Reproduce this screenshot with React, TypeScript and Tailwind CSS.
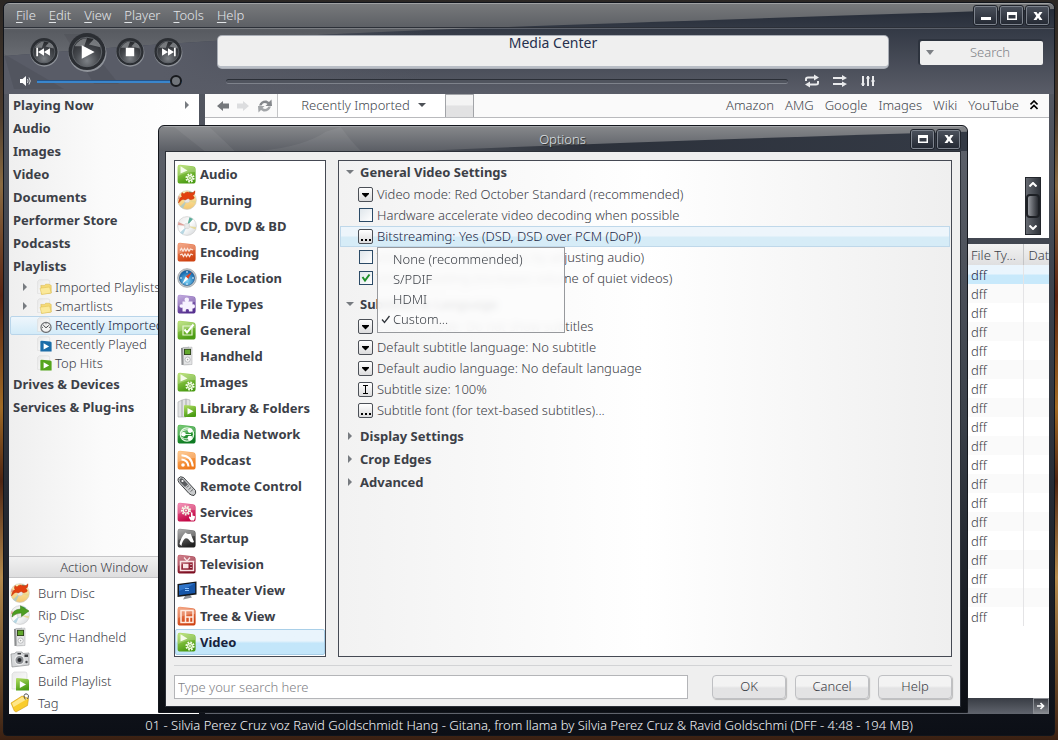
import React, { useState } from "react";

type IconName =
  | "media"
  | "burn"
  | "disc"
  | "encoding"
  | "compass"
  | "puzzle"
  | "check"
  | "handheld"
  | "library"
  | "network"
  | "podcast"
  | "remote"
  | "services"
  | "startup"
  | "television"
  | "theater"
  | "tree"
  | "rip"
  | "camera"
  | "build"
  | "tag"
  | "folder"
  | "clock"
  | "played"
  | "hits";

const tileColors: Record<string, [string, string]> = {
  green: ["#b4e065", "#4b9c14"],
  forest: ["#55bf4e", "#0d7a22"],
  orange: ["#f3946a", "#cf4313"],
  amber: ["#ffc07a", "#ef7a1c"],
  purple: ["#b79adb", "#56308f"],
  pink: ["#f27aa9", "#c30845"],
  black: ["#9b9b9b", "#222222"],
  red: ["#c8606f", "#7d0f22"],
};

const Gradients: React.FC = () => (
  <svg width="0" height="0" className="absolute" aria-hidden="true">
    <defs>
      {Object.entries(tileColors).map(([name, [from, to]]) => (
        <linearGradient key={name} id={`tile-${name}`} x1="0" y1="0" x2="0.4" y2="1">
          <stop offset="0" stopColor={from} />
          <stop offset="1" stopColor={to} />
        </linearGradient>
      ))}
      <linearGradient id="disc" x1="0" y1="0" x2="1" y2="1">
        <stop offset="0" stopColor="#e6e6e6" />
        <stop offset="0.5" stopColor="#ffffff" />
        <stop offset="1" stopColor="#cfd3d6" />
      </linearGradient>
      <linearGradient id="gold" x1="0" y1="0" x2="0" y2="1">
        <stop offset="0" stopColor="#fff1b8" />
        <stop offset="1" stopColor="#f3c76f" />
      </linearGradient>
      <radialGradient id="compass" cx="0.5" cy="0.7" r="0.6">
        <stop offset="0" stopColor="#7fd3f7" />
        <stop offset="1" stopColor="#1567ac" />
      </radialGradient>
      <radialGradient id="knob" cx="0.5" cy="0.8" r="0.8">
        <stop offset="0" stopColor="#7d8186" />
        <stop offset="0.5" stopColor="#45484d" />
        <stop offset="1" stopColor="#24262a" />
      </radialGradient>
      <linearGradient id="sheet" x1="0" y1="0" x2="1" y2="1">
        <stop offset="0" stopColor="#e9e9e9" />
        <stop offset="1" stopColor="#ffffff" />
      </linearGradient>
    </defs>
  </svg>
);

const Tile: React.FC<{ color: string; children?: React.ReactNode }> = ({ color, children }) => (
  <>
    <path
      d="M3 .7 16 2.2q2.6.3 2.6 2.6V17q0 2.6-2.8 2.6H3.2Q.6 19.6.6 17V3Q.6.6 3 .7Z"
      fill={`url(#tile-${color})`}
    />
    <path d="M1.2 3Q1.2 1.3 3 1.3L16 2.8Q18 3 18 4.8V8Q9 8 1.2 12Z" fill="#fff" opacity="0.22" />
    {children}
  </>
);

const Gear: React.FC<{ cx: number; cy: number; r: number }> = ({ cx, cy, r }) => (
  <>
    <circle cx={cx} cy={cy} r={r} fill="none" stroke="#f4fbe8" strokeWidth="2" strokeDasharray="1.7 1.1" />
    <circle cx={cx} cy={cy} r={r - 1.3} fill="none" stroke="#f4fbe8" strokeWidth="1.2" />
    <circle cx={cx} cy={cy} r="1" fill="#f4fbe8" />
  </>
);

const Flame: React.FC = () => (
  <path
    d="M1.5 13Q2 8 5 6.5 3.8 4.5 5 2.5 6 4 7.5 3.5 9 1 13 2.6 16 3.5 18 .8 18.4 4.5 15.5 6 18 6.5 17 8.6 14 10.6 12 9 11.5 8 10 9 8 10.5 7 9.5 6 9 4.5 10 3 11 1.5 13Z"
    fill="#e2400f"
    stroke="#b92a06"
    strokeWidth="0.4"
  />
);

const Disc: React.FC<{ fill: string }> = ({ fill }) => (
  <>
    <circle cx="10" cy="10" r="9.4" fill={fill} stroke="#c9c9c9" strokeWidth="0.6" />
    <path d="M10 10 12.5 1.2 16 3Z" fill="#5fae9c" />
    <path d="M10 10 3 16.5 6 18.6Z" fill="#9ac7d8" opacity="0.7" />
    <path d="M10 10 .9 9 1.5 6Z" fill="#d98f84" opacity="0.8" />
    <path d="M10 10 19 11 18.5 13.5Z" fill="#e3d68c" opacity="0.8" />
    <circle cx="10" cy="10" r="2.8" fill="#eee" stroke="#c4c4c4" strokeWidth="0.5" />
    <circle cx="10" cy="10" r="1.2" fill="#fff" stroke="#bbb" strokeWidth="0.4" />
  </>
);

const Sheet: React.FC = () => (
  <path d="M4 1H15Q17 1 17 3V18H2V3Z" fill="url(#sheet)" stroke="#d5d5d5" strokeWidth="0.6" />
);

const drawings: Record<IconName, React.ReactNode> = {
  media: (
    <Tile color="green">
      <path d="M3.5 2.2V9.5L10.5 6.5Z" fill="#f6fcec" />
      <Gear cx={13} cy={14} r={3.6} />
    </Tile>
  ),
  burn: (
    <>
      <Disc fill="url(#gold)" />
      <Flame />
    </>
  ),
  disc: <Disc fill="url(#disc)" />,
  encoding: (
    <Tile color="orange">
      <path
        d="M3 8.5 4.5 6.5 6 9 7.5 6.5 9 9 10.5 6.5 12 9 13.5 7 16 8M3 13 5 12 6.5 14.5 8 12 9.5 14.5 11 12 12.5 14.5 14 12 16 13"
        fill="none"
        stroke="#fbe3d8"
        strokeWidth="1.3"
      />
    </Tile>
  ),
  compass: (
    <>
      <circle cx="10" cy="10" r="9.3" fill="#c9ced2" stroke="#7d8489" strokeWidth="0.6" />
      <circle cx="10" cy="10" r="7.6" fill="url(#compass)" stroke="#23547f" strokeWidth="0.6" />
      <path d="M14.8 4 8.8 8.6 11.2 11Z" fill="#e5421d" />
      <path d="M5.2 16 8.8 8.6 11.2 11Z" fill="#fff" />
      <path d="M10 3v2M10 15v2M3 10h2M15 10h2" stroke="#e8f5ff" />
    </>
  ),
  puzzle: (
    <Tile color="purple">
      <path
        d="M7.5 5.5Q7.5 3.5 9.8 3.5T12 5.5Q12 6.8 11.2 7.5H15.5V10.5Q18 9.800 18 12.300T15.500 14.500V17.500H11.800Q12.500 15 10.300 15T9 17.500H5.500V13.500Q2.500 14.200 2.500 12T5.500 10.500V7.500H8.500Q7.500 6.800 7.500 5.500Z"
        fill="#f7f2ff"
      />
    </Tile>
  ),
  check: (
    <Tile color="green">
      <path d="M6 6H15V15H6Z" fill="none" stroke="#e9f7d3" strokeWidth="1.2" />
      <path d="M7.5 9.5 10 12.5 16.5 4.5" fill="none" stroke="#fff" strokeWidth="2" />
    </Tile>
  ),
  handheld: (
    <>
      <path d="M4 2 12 .8 12.5 18.5 4.5 19Z" fill="#8b8d8f" />
      <path d="M6 1.5 15 1.2V18.5L6.5 19Z" fill="#e3e4e5" stroke="#a5a7a9" strokeWidth="0.5" />
      <path d="M7 2.8H14V9H7Z" fill="#2c3a1c" />
      <path d="M7.8 3.6H13.2V8.2H7.8Z" fill="#62a82e" />
      <circle cx="10.6" cy="13.6" r="2.6" fill="#fafafa" stroke="#9b9d9f" strokeWidth="0.6" />
      <circle cx="10.6" cy="13.6" r="0.8" fill="#a5a7a9" />
    </>
  ),
  library: (
    <>
      <path d="M1 4 5 2V19H1ZM5 2 9 1V19H5ZM9 1 13 2V18H9Z" fill="#e2e3e4" stroke="#a9abad" strokeWidth="0.6" />
      <path d="M8 7 18 8Q19 8 19 9.5V18Q19 19 18 19H8Q7 19 7 18V8Q7 7 8 7Z" fill="url(#tile-green)" />
      <path d="M10.5 10V16.5L16.5 13.2Z" fill="#fff" />
    </>
  ),
  network: (
    <Tile color="forest">
      <circle cx="10" cy="10.5" r="6.6" fill="none" stroke="#e6f8e3" strokeWidth="1.3" />
      <path d="M4 8Q10 3.5 15 7.5M5 13.5Q10 17 15.5 12M6 10.5H14" fill="none" stroke="#e6f8e3" />
      <circle cx="13" cy="6.6" r="2.3" fill="#fff" />
      <circle cx="6.5" cy="10.3" r="2.3" fill="#fff" />
      <circle cx="12.8" cy="14" r="2.3" fill="#fff" />
    </Tile>
  ),
  podcast: (
    <Tile color="amber">
      <circle cx="6" cy="15" r="1.8" fill="#fff" />
      <path d="M4.5 9.5Q11 10 11.5 16.5M4.5 5.2Q15 6 15.8 16.5" fill="none" stroke="#fff" strokeWidth="2.1" />
    </Tile>
  ),
  remote: (
    <>
      <path
        d="M1.2 2.5Q3-.5 6.5 1.5L18.5 14.5Q19.5 17.5 17 19.5 14 19.5 12 17.5L2 6.5Q.5 4.5 1.2 2.5Z"
        fill="#c9cbcd"
        stroke="#3e4042"
        strokeWidth="1"
      />
      <path d="M2.5 3.5Q4 1.5 6 3L11 8.5 8 11 3 6Z" fill="#5a5c5f" />
      <path d="M9.5 11.5 12 9.5M11.5 13.5 14 11.5M13.5 15.5 16 13.5" stroke="#6b6d6f" />
      <circle cx="5.5" cy="5" r="1.1" fill="#fff" />
    </>
  ),
  services: (
    <Tile color="pink">
      <Gear cx={9} cy={8.5} r={4} />
      <path d="M13 17.5Q11.5 15.5 12 14.5L14 15V10.5Q15 10 15.5 11V13.5L18 14.2Q18 16.5 17 18.5H14Z" fill="#fff" />
    </Tile>
  ),
  startup: (
    <Tile color="black">
      <path d="M2.5 16Q4 9 8.5 4.5 11 7 13.5 5.5L17 14Q14 15.5 12.5 12.5 10.5 9.5 8 10.5 5 13 4.5 18Z" fill="#fff" />
    </Tile>
  ),
  television: (
    <Tile color="red">
      <path d="M3.5 7.5H16.5V16.5H3.5Z" fill="none" stroke="#f9e4e6" strokeWidth="1.5" />
      <path d="M6 9.8H11.5V14.3H6Z" fill="#f9e4e6" />
      <path d="M14 10V11M14 13V14M7 3.5 10 7 13 3.5" fill="none" stroke="#f9e4e6" strokeWidth="1.2" />
    </Tile>
  ),
  theater: (
    <>
      <path d="M6 19.5 15 17.5 13 15 8 16Z" fill="#8b8f94" />
      <path d="M.5 4 19.5 1.5V14.5L.5 17Z" fill="#15181c" />
      <path d="M2 5.2 18.2 3V13L2 15.200Z" fill="#1756a8" />
      <path d="M2 5.2 18.2 3Q11 8 2 11Z" fill="#2f74c8" />
      <path d="M8 8.5H12M8 10.5H12" stroke="#8cc3ff" />
    </>
  ),
  tree: (
    <Tile color="orange">
      <path d="M4 4.5H16V16.5H4ZM8.5 4.5V16.5M8.5 11H16M12.5 11V16.5" fill="none" stroke="#ffeadf" strokeWidth="1.5" />
    </Tile>
  ),
  rip: (
    <>
      <Disc fill="url(#disc)" />
      <path d="M2 12Q2 4.5 10.5 4V.8L19 6 11.5 11.5V8Q6 7.5 2 12Z" fill="#4c9e22" stroke="#2f7510" strokeWidth="0.5" />
    </>
  ),
  camera: (
    <>
      <path d="M1 5 5 4.5 6 3H12L13 4.5 19 4V16L2 18Z" fill="#d4d6d8" stroke="#8e9092" strokeWidth="0.7" />
      <circle cx="9.5" cy="11" r="4.6" fill="#8b8e92" stroke="#eceded" strokeWidth="1.2" />
      <circle cx="9.5" cy="11" r="2" fill="#25272a" />
      <path d="M14.5 5.5H18V8H14.5ZM7.5 4H11V5.5H7.5Z" fill="#3b3d40" />
      <circle cx="16.5" cy="13" r="1.2" fill="#47494c" />
    </>
  ),
  build: (
    <>
      <Sheet />
      <path d="M7 7 17.5 8Q19 8.2 19 9.5V19.5H6V8Q6 7 7 7Z" fill="url(#tile-green)" />
      <path d="M9.8 10V17L16 13.5Z" fill="#fff" />
    </>
  ),
  tag: (
    <>
      <path d="M1 10 12 3 18.5 5.5 17.5 12.5 6 19Q4 18.5 3.5 16Z" fill="#f9cc2c" stroke="#cf9812" strokeWidth="0.6" />
      <path d="M2 10.3 12 4 17.5 6Q10 10 3.5 14Z" fill="#ffe78a" />
      <path d="M15.3 6.5Q12.5 1.5 16 .8 20 1.5 17.5 6" fill="none" stroke="#4c4c4c" />
    </>
  ),
  folder: (
    <>
      <Sheet />
      <path d="M6 8H11L12 6.5H16L19 8V17.5L7 19Z" fill="#f5da76" stroke="#d5b23f" strokeWidth="0.6" />
      <path d="M5 11.5 17 10 19 17.5 7 19.3Z" fill="#fbe99a" stroke="#dcbb4d" strokeWidth="0.6" />
    </>
  ),
  clock: (
    <>
      <Sheet />
      <circle cx="12.5" cy="13" r="6.3" fill="#f2f2f2" stroke="#6f7174" strokeWidth="1.5" />
      <path d="M9 10 12.5 13.5 16 10.5M12.5 8V9M17.5 13H16.5M8.5 13H7.5" fill="none" stroke="#3e4042" strokeWidth="1.2" />
    </>
  ),
  played: (
    <>
      <Sheet />
      <path d="M7 6 17.5 7Q19.5 7.200 19.500 8.500V19.500H5.500V7Q5.500 6 7 6Z" fill="#1c6da8" />
      <path d="M9.5 9V17L16.5 13Z" fill="#fff" />
    </>
  ),
  hits: (
    <>
      <Sheet />
      <path d="M7 6 17.5 7Q19.5 7.200 19.500 8.500V19.500H5.500V7Q5.500 6 7 6Z" fill="#55a51c" />
      <path d="M9.5 9V17L16.5 13Z" fill="#fff" />
    </>
  ),
};

const Icon: React.FC<{ name: IconName; className?: string }> = ({ name, className = "size-5" }) => (
  <svg viewBox="0 0 20 20" className={`shrink-0 ${className}`} aria-hidden="true">
    {drawings[name]}
  </svg>
);

const Triangle: React.FC<{ open?: boolean }> = ({ open = false }) => (
  <svg viewBox="0 0 8 8" className="size-2 shrink-0" aria-hidden="true">
    <path d={open ? "M0 2H8L4 6Z" : "M2 0V8L6 4Z"} fill="#777b80" />
  </svg>
);

const menus = ["File", "Edit", "View", "Player", "Tools", "Help"];
const links = ["Amazon", "AMG", "Google", "Images", "Wiki", "YouTube"];

const library = ["Playing Now", "Audio", "Images", "Video", "Documents", "Performer Store", "Podcasts", "Playlists"];

const playlists: { label: string; icon: IconName; expandable?: boolean; selected?: boolean }[] = [
  { label: "Imported Playlists", icon: "folder", expandable: true },
  { label: "Smartlists", icon: "folder", expandable: true },
  { label: "Recently Imported", icon: "clock", selected: true },
  { label: "Recently Played", icon: "played" },
  { label: "Top Hits", icon: "hits" },
];

const actions: { label: string; icon: IconName }[] = [
  { label: "Burn Disc", icon: "burn" },
  { label: "Rip Disc", icon: "rip" },
  { label: "Sync Handheld", icon: "handheld" },
  { label: "Camera", icon: "camera" },
  { label: "Build Playlist", icon: "build" },
  { label: "Tag", icon: "tag" },
];

const categories: { label: string; icon: IconName }[] = [
  { label: "Audio", icon: "media" },
  { label: "Burning", icon: "burn" },
  { label: "CD, DVD & BD", icon: "disc" },
  { label: "Encoding", icon: "encoding" },
  { label: "File Location", icon: "compass" },
  { label: "File Types", icon: "puzzle" },
  { label: "General", icon: "check" },
  { label: "Handheld", icon: "handheld" },
  { label: "Images", icon: "media" },
  { label: "Library & Folders", icon: "library" },
  { label: "Media Network", icon: "network" },
  { label: "Podcast", icon: "podcast" },
  { label: "Remote Control", icon: "remote" },
  { label: "Services", icon: "services" },
  { label: "Startup", icon: "startup" },
  { label: "Television", icon: "television" },
  { label: "Theater View", icon: "theater" },
  { label: "Tree & View", icon: "tree" },
  { label: "Video", icon: "media" },
];

const files = Array.from({ length: 19 }, (_, i) => ({ id: i, type: "dff" }));

interface WindowButtonProps {
  kind: "minimize" | "maximize" | "close";
}

const WindowButton: React.FC<WindowButtonProps> = ({ kind }) => (
  <button
    type="button"
    aria-label={kind}
    className="flex h-[19px] w-[23px] items-center justify-center rounded-xs border border-[#7d838d] bg-[#2d323c] bg-linear-to-b from-[#4a505b] to-[#252a34] outline outline-[#20242c]"
  >
    <svg viewBox="0 0 12 12" className="size-3" aria-hidden="true">
      {kind === "minimize" && <path d="M1 7H11V10H1Z" fill="#fff" />}
      {kind === "maximize" && <path d="M1 2H11V10H1ZM2.5 5V8.5H9.5V5Z" fill="#fff" fillRule="evenodd" />}
      {kind === "close" && (
        <path d="M1.5 2H4.5L6 4.2 7.5 2H10.5L7.7 6 10.5 10H7.5L6 7.8 4.5 10H1.5L4.3 6Z" fill="#fff" />
      )}
    </svg>
  </button>
);

const transport = [
  { label: "Previous", size: "size-7", path: "M9 14V26H11.5V14ZM11.500 20 20 14.500V25.500ZM20 20 28.500 14.500V25.500Z" },
  { label: "Play", size: "size-[38px]", path: "M14.5 13V27L28 20Z" },
  { label: "Stop", size: "size-7", path: "M14 14H26V26H14Z" },
  { label: "Next", size: "size-7", path: "M28.500 14V26H31V14ZM11.500 14.500 20 20 11.500 25.500ZM20 14.500 28.500 20 20 25.500Z" },
];

const TransportButton: React.FC<{ label: string; size: string; path: string }> = ({ label, size, path }) => (
  <button type="button" aria-label={label} className={`shrink-0 ${size}`}>
    <svg viewBox="0 0 40 40" className="size-full overflow-visible" aria-hidden="true">
      <circle cx="20.500" cy="21" r="20" fill="#8f939a" />
      <circle cx="20" cy="19.5" r="19.5" fill="#2b2e33" />
      <circle cx="20" cy="20" r="15.5" fill="url(#knob)" stroke="#63676d" strokeWidth="1" />
      <path d="M7 14Q12 5.5 20 5.5L17 14ZM22 12 27 6.5Q33 9 34 15Z" fill="#aeb2b7" opacity="0.55" />
      <path d={path} fill="#fff" />
    </svg>
  </button>
);

const Sidebar: React.FC = () => (
  <aside className="flex w-[190px] shrink-0 flex-col bg-white bg-linear-to-r from-[#efefef] via-[#fbfbfb] to-[#ffffff] text-[#3c4047]">
    <nav className="flex-1">
      <ul>
        {library.map((label, index) => (
          <li key={label} className="flex h-[23px] items-center justify-between pr-2 pb-[2px] pl-1">
            <a href="#" className="font-bold">
              {label}
            </a>
            {index === 0 && <Triangle />}
          </li>
        ))}
        {playlists.map(({ label, icon, expandable, selected }) => (
          <li
            key={label}
            className={`ml-px flex h-[19px] items-center rounded-xs border pb-px pl-[10px] ${
              selected
                ? "border-[#b9d5ea] bg-linear-to-b from-[#eef6fc] to-[#d3ebf8] text-[#1b2644]"
                : "border-transparent"
            }`}
          >
            <span className="flex w-[15px] items-center">{expandable && <Triangle />}</span>
            <Icon name={icon} className="mr-[3px] size-4" />
            <a href="#" className="whitespace-nowrap">
              {label}
            </a>
          </li>
        ))}
        {["Drives & Devices", "Services & Plug-ins"].map((label) => (
          <li key={label} className="flex h-[23px] items-center pb-[2px] pl-1">
            <a href="#" className="font-bold">
              {label}
            </a>
          </li>
        ))}
      </ul>
    </nav>
    <section className="bg-white">
      <h2 className="flex h-[22px] items-center justify-center border-y border-[#c5c5c7] bg-linear-to-b from-[#f1f1f1] to-[#dededf]">
        Action Window
      </h2>
      <ul className="pt-1">
        {actions.map(({ label, icon }) => (
          <li key={label}>
            <button type="button" className="flex h-[22px] w-full items-center gap-2 pl-px">
              <Icon name={icon} />
              {label}
            </button>
          </li>
        ))}
      </ul>
    </section>
  </aside>
);

const FileView: React.FC = () => (
  <main className="flex min-w-0 flex-1 flex-col">
    <div className="flex h-6 items-stretch border-b border-[#b9babd] bg-[#fafafa] text-[#43474e]">
      <div className="flex w-[73px] items-center gap-2 border-r border-[#c4c5c7] pl-3">
        <button type="button" aria-label="Back">
          <svg viewBox="0 0 12 10" className="h-[10px] w-3">
            <path d="M0 5 6 0V2.5H12V7.5H6V10Z" fill="#75787c" />
          </svg>
        </button>
        <button type="button" aria-label="Forward">
          <svg viewBox="0 0 12 10" className="h-[10px] w-3">
            <path d="M12 5 6 0V2.5H0V7.5H6V10Z" fill="#dcdddf" />
          </svg>
        </button>
        <button type="button" aria-label="Refresh">
          <svg viewBox="0 0 16 14" className="h-[14px] w-4">
            <path d="M2 6.5Q4 1 9.5 1.5L12 3 14.5.5 15 7H8.5L10.5 5Q6.500 2.500 4.500 6.500Z" fill="#85888c" />
            <path d="M14 7.5Q12 13 6.5 12.5L4 11 1.5 13.5 1 7H7.5L5.5 9Q9.500 11.500 11.500 7.500Z" fill="#a2a5a8" />
          </svg>
        </button>
      </div>
      <button type="button" className="flex w-[167px] items-center justify-center gap-2 bg-white pb-[2px] pl-1">
        Recently Imported
        <svg viewBox="0 0 8 4" className="h-1 w-2" aria-hidden="true">
          <path d="M0 0H8L4 4Z" fill="#4d5157" />
        </svg>
      </button>
      <button
        type="button"
        aria-label="New tab"
        className="w-[29px] border-x border-t border-[#a2a4a8] bg-linear-to-b from-[#f4f4f4] from-45% to-[#e2e2e3] to-50%"
      />
      <nav className="ml-auto flex items-center gap-[11px] pr-[11px] pb-[2px]">
        {links.map((link) => (
          <a key={link} href="#">
            {link}
          </a>
        ))}
        <button type="button" aria-label="Collapse">
          <svg viewBox="0 0 8 10" className="h-[10px] w-2">
            <path d="M.5 4.5 4 1 7.5 4.5M.5 9 4 5.5 7.5 9" fill="none" stroke="#000" strokeWidth="1.6" />
          </svg>
        </button>
      </nav>
    </div>

    <div className="flex h-[120px] justify-end bg-white pt-[59px] pr-2">
      <div className="flex h-[58px] w-4 flex-col items-center justify-between border border-[#23262c] bg-linear-to-r from-[#666a71] to-[#30343b] py-1">
        <svg viewBox="0 0 8 5" className="h-[5px] w-2" aria-hidden="true">
          <path d="M.5 4.5 4 1 7.5 4.5" fill="none" stroke="#fff" strokeWidth="2" />
        </svg>
        <div className="h-6 w-[14px] rounded-sm border-2 border-[#1d2025] bg-linear-to-r from-[#9a9da3] to-[#2a2d33]" />
        <svg viewBox="0 0 8 5" className="h-[5px] w-2" aria-hidden="true">
          <path d="M.5 .5 4 4 7.5 .5" fill="none" stroke="#fff" strokeWidth="2" />
        </svg>
      </div>
    </div>

    <div className="mt-[6px] flex-1 bg-white">
      <table className="w-full table-fixed text-left text-[#3c4047]">
        <colgroup>
          <col />
          <col className="w-[57px]" />
          <col className="w-[26px]" />
        </colgroup>
        <thead>
          <tr className="h-[21px] bg-linear-to-b from-[#f2f2f2] to-[#dfdfe0]">
            <td />
            <th scope="col" className="border-r border-[#c4c5c7] pl-[5px] leading-[18px] font-light whitespace-nowrap">
              File Ty...
            </th>
            <th scope="col" className="overflow-hidden pl-[5px] leading-[18px] font-light">
              Dat
            </th>
          </tr>
        </thead>
        <tbody>
          {files.map(({ id, type }) => (
            <tr
              key={id}
              className={`h-[19px] ${
                id === 0
                  ? "bg-linear-to-b from-[#eaf5fd] from-45% to-[#c8e9fb] to-55% text-[#1b2644]"
                  : id % 2
                    ? "bg-[#fafafa]"
                    : "bg-white"
              }`}
            >
              <td />
              <td className="border-r border-[#e4e4e6] pl-[5px] leading-[18px]">{type}</td>
              <td />
            </tr>
          ))}
        </tbody>
      </table>
    </div>
    <div className="flex h-4 justify-end bg-linear-to-b from-[#383c44] to-[#61656e]">
      <button
        type="button"
        aria-label="Scroll right"
        className="flex w-4 items-center justify-center border border-[#8a8d93] bg-linear-to-b from-[#3a3d44] to-[#85888e]"
      >
        <svg viewBox="0 0 8 8" className="size-2">
          <path d="M0 4H6M3.5 1 6.5 4 3.5 7" fill="none" stroke="#fff" strokeWidth="1.7" />
        </svg>
      </button>
    </div>
  </main>
);

interface SettingProps {
  kind: "menu" | "dialog" | "text";
  label: string;
}

const Setting: React.FC<SettingProps> = ({ kind, label }) => (
  <button type="button" className="flex h-[21px] w-full items-center gap-1 pb-px pl-[18px] whitespace-nowrap">
    <span className="flex size-[15px] items-center justify-center rounded-xs border border-[#4c5057] bg-linear-to-b from-white to-[#dcdcdd]">
      <svg viewBox="0 0 13 13" className="size-[13px]" aria-hidden="true">
        {kind === "menu" && <path d="M3 5H10V6L6.5 9.5 3 6Z" fill="#000" />}
        {kind === "dialog" && <path d="M2 9H4V11H2ZM6 9H8V11H6ZM10 9H12V11H10Z" fill="#000" />}
        {kind === "text" && <path d="M4 2.5H9M4 10.5H9M6.5 2.5V10.5" fill="none" stroke="#000" />}
      </svg>
    </span>
    {label}
  </button>
);

const CheckSetting: React.FC<{ label: string; checked?: boolean }> = ({ label, checked = false }) => {
  const [on, setOn] = useState(checked);

  return (
    <label className="flex h-[21px] items-center gap-1 pb-px pl-[19px] whitespace-nowrap">
      <span className="grid size-[14px]">
        <input
          type="checkbox"
          checked={on}
          onChange={(e) => setOn(e.target.checked)}
          className="col-start-1 row-start-1 size-[14px] appearance-none border border-[#2b4a66] bg-linear-to-br from-[#dfe6eb] to-white"
        />
        {on && (
          <svg viewBox="0 0 14 14" className="pointer-events-none col-start-1 row-start-1 size-[14px]">
            <path d="M3.5 6 6 9.5 10.5 3.5" fill="none" stroke="#1f8f2a" strokeWidth="2" />
          </svg>
        )}
      </span>
      {label}
    </label>
  );
};

const SectionTitle: React.FC<{ label: string; open?: boolean }> = ({ label, open }) => (
  <h3>
    <button type="button" className="flex h-[23px] items-center gap-[6px] pb-[2px] pl-[6px] font-bold">
      <Triangle open={open} />
      {label}
    </button>
  </h3>
);

const BitstreamMenu: React.FC = () => (
  <ul
    role="menu"
    className="absolute top-full left-[37px] z-10 w-[188px] border border-[#97999d] bg-[#fcfcfc]/90 pt-px pb-[3px] text-[#3c4047] backdrop-blur-[3px]"
  >
    {["None (recommended)", "S/PDIF", "HDMI", "Custom..."].map((item) => (
      <li key={item} role="menuitem" className="flex h-5 items-center">
        <span className="flex w-[15px] justify-end pr-[2px]">
          {item === "Custom..." && (
            <svg viewBox="0 0 10 10" className="size-[10px]" aria-hidden="true">
              <path d="M1 5.5 3.5 8.5 8.5 2" fill="none" stroke="#33373d" strokeWidth="1.3" />
            </svg>
          )}
        </span>
        {item}
      </li>
    ))}
  </ul>
);

const OptionsDialog: React.FC = () => {
  const [category, setCategory] = useState("Video");

  return (
    <div
      role="dialog"
      aria-label="Options"
      className="absolute top-[125px] right-[90px] bottom-[27px] left-[158px] z-20 flex flex-col rounded-t-md border border-[#14171d] bg-linear-to-b from-[#5f636c] via-[#3a4049] to-[#0b0e14] px-[6px] pb-[5px] text-[#3c4047]"
    >
      <header className="relative -mx-[6px] flex h-[25px] items-center justify-end overflow-hidden rounded-t-md border-t border-[#a5a7aa] pr-[7px]">
        <svg viewBox="0 0 800 25" preserveAspectRatio="none" className="absolute inset-0 size-full" aria-hidden="true">
          <defs>
            <linearGradient id="title-light" x1="0" y1="0" x2="0" y2="1">
              <stop offset="0" stopColor="#85878a" />
              <stop offset="1" stopColor="#5b5e65" />
            </linearGradient>
            <linearGradient id="title-dark" x1="0" y1="0" x2="1" y2="0">
              <stop offset="0" stopColor="#4d5159" />
              <stop offset="0.3" stopColor="#2c313b" />
              <stop offset="1" stopColor="#343a45" />
            </linearGradient>
          </defs>
          <rect width="800" height="25" fill="url(#title-light)" />
          <path d="M15 0 50 0 75 25H45ZM100 25Q145 20 165 5L180 0Q190 15 200 25Z" fill="#fff" opacity="0.06" />
          <path d="M260 25Q500 14 800 5V25Z" fill="url(#title-dark)" />
        </svg>
        <h2 className="relative flex-1 pl-[55px] text-center text-[#dfe1e4] [text-shadow:1px_1px_1px_#222]">Options</h2>
        <div className="relative flex gap-[3px]">
          <WindowButton kind="maximize" />
          <WindowButton kind="close" />
        </div>
      </header>

      <div className="flex flex-1 flex-col border border-[#2c3038] bg-[#efefef] px-2 pt-2 pb-[7px]">
        <div className="flex flex-1 gap-3">
          <ul className="w-[152px] shrink-0 border border-[#454953] bg-white">
            {categories.map(({ label, icon }) => (
              <li key={label}>
                <button
                  type="button"
                  onClick={() => setCategory(label)}
                  className={`flex h-[26px] w-full items-center gap-[3px] rounded-xs border pb-px pl-px font-bold whitespace-nowrap ${
                    category === label
                      ? "border-[#a9cfe8] bg-linear-to-b from-[#e9f4fc] from-45% to-[#c3e6fa] to-55% text-[#18223c]"
                      : "border-transparent"
                  }`}
                >
                  <Icon name={icon} />
                  {label}
                </button>
              </li>
            ))}
          </ul>

          <section className="min-w-0 flex-1 border border-[#454953] bg-linear-to-r from-[#f2f2f2] via-white to-[#efefef] px-px">
            <SectionTitle label="General Video Settings" open />
            <Setting kind="menu" label="Video mode: Red October Standard (recommended)" />
            <CheckSetting label="Hardware accelerate video decoding when possible" />
            <div className="relative bg-linear-to-b from-[#edf5fb] from-45% to-[#d6ecf7] to-55% text-[#1b2644] outline -outline-offset-1 outline-[#bfd8ea]">
              <Setting kind="dialog" label="Bitstreaming: Yes (DSD, DSD over PCM (DoP))" />
              <BitstreamMenu />
            </div>
            <CheckSetting label="VideoClock (smooth video by adjusting audio)" />
            <CheckSetting label="Volume leveling (increases volume of quiet videos)" checked />
            <div className="pt-1">
              <SectionTitle label="Subtitles & Language" open />
              <Setting kind="menu" label="Subtitle mode: Do not show subtitles" />
              <Setting kind="menu" label="Default subtitle language: No subtitle" />
              <Setting kind="menu" label="Default audio language: No default language" />
              <Setting kind="text" label="Subtitle size: 100%" />
              <Setting kind="dialog" label="Subtitle font (for text-based subtitles)..." />
            </div>
            <div className="pt-1">
              <SectionTitle label="Display Settings" />
              <SectionTitle label="Crop Edges" />
              <SectionTitle label="Advanced" />
            </div>
          </section>
        </div>

        <div className="mt-2 flex items-center gap-[9px] border-t border-[#d2d3d5] pt-[9px]">
          <input
            type="search"
            aria-label="Search options"
            placeholder="Type your search here"
            className="mr-[15px] h-6 min-w-0 flex-1 border border-[#b4b5b8] bg-white px-[3px] placeholder-[#7f8287]"
          />
          {["OK", "Cancel", "Help"].map((label) => (
            <button
              key={label}
              type="button"
              className="h-6 w-[74px] rounded-sm border border-[#bfc0c3] bg-linear-to-b from-[#f3f3f3] from-45% to-[#e3e3e4] to-55% pb-[2px] shadow-[1px_1px_1px_#bbb]"
            >
              {label}
            </button>
          ))}
        </div>
      </div>
    </div>
  );
};

const Header: React.FC = () => {
  const [volume, setVolume] = useState(100);
  const [position, setPosition] = useState(0);

  return (
    <header className="relative overflow-hidden rounded-t-md border-t border-[#9fa1a3]">
      <svg viewBox="0 0 1050 90" preserveAspectRatio="none" className="absolute inset-0 size-full" aria-hidden="true">
        <defs>
          <linearGradient id="shell-light" x1="0" y1="0" x2="0" y2="1">
            <stop offset="0" stopColor="#77797b" />
            <stop offset="0.3" stopColor="#585b61" />
            <stop offset="0.65" stopColor="#6c6f75" />
          </linearGradient>
          <linearGradient id="shell-dark" x1="0" y1="0" x2="0" y2="1">
            <stop offset="0" stopColor="#262c37" />
            <stop offset="0.25" stopColor="#343a46" />
            <stop offset="1" stopColor="#5a5d68" />
          </linearGradient>
          <linearGradient id="shell-fade" x1="0" y1="0" x2="1" y2="0">
            <stop offset="0" stopColor="#595c67" />
            <stop offset="0.15" stopColor="#595c67" />
            <stop offset="0.4" stopColor="#595c67" stopOpacity="0" />
          </linearGradient>
        </defs>
        <rect width="1050" height="90" fill="url(#shell-light)" />
        <path d="M0 52Q200 35 400 27T1050 5V90H0Z" fill="url(#shell-dark)" />
        <path d="M0 52Q200 35 400 27T1050 5V90H0Z" fill="url(#shell-fade)" />
        <path d="M60 30H75L115 80H90ZM0 50 60 85H10Z" fill="#2d3038" opacity="0.15" />
      </svg>

      <div className="relative flex h-6 items-center justify-between border-b border-[#2c3038] pr-[5px] pl-3">
        <nav className="flex gap-[13px] pb-[2px] text-[#e2e5e8] [text-shadow:1px_1px_1px_#26282d]">
          {menus.map((menu) => (
            <button key={menu} type="button">
              <span className="underline underline-offset-2">{menu[0]}</span>
              {menu.slice(1)}
            </button>
          ))}
        </nav>
        <div className="flex gap-[3px]">
          <WindowButton kind="minimize" />
          <WindowButton kind="maximize" />
          <WindowButton kind="close" />
        </div>
      </div>

      <div className="relative flex h-[66px] border-t border-white/20">
        <div className="flex w-[214px] shrink-0 flex-col">
          <div className="flex items-center gap-[10px] pt-1 pl-[26px]">
            {transport.map((item) => (
              <TransportButton key={item.label} {...item} />
            ))}
          </div>
          <div className="flex h-5 items-center gap-[5px] pl-[15px]">
            <svg viewBox="0 0 13 12" className="h-3 w-[13px]" aria-hidden="true">
              <path d="M1 4H3.5L7 1V11L3.5 8H1Z" fill="#fff" />
              <path d="M8.5 4Q9.5 6 8.5 8M10 2.500Q12.500 6 10 9.500" fill="none" stroke="#d8dade" />
            </svg>
            <input
              type="range"
              aria-label="Volume"
              value={volume}
              onChange={(e) => setVolume(Number(e.target.value))}
              className="h-3 w-[145px] appearance-none bg-transparent [&::-webkit-slider-runnable-track]:h-[3px] [&::-webkit-slider-runnable-track]:border-t [&::-webkit-slider-runnable-track]:border-[#24548a] [&::-webkit-slider-runnable-track]:bg-[#3a86cc] [&::-webkit-slider-thumb]:-mt-[6px] [&::-webkit-slider-thumb]:size-3 [&::-webkit-slider-thumb]:appearance-none [&::-webkit-slider-thumb]:rounded-full [&::-webkit-slider-thumb]:border-2 [&::-webkit-slider-thumb]:border-[#17191d] [&::-webkit-slider-thumb]:bg-[#71757b]"
            />
          </div>
        </div>

        <div className="min-w-0 flex-1 pt-[7px]">
          <div className="h-8 rounded-sm border-b-2 border-[#b9bec6] bg-[#efefef] text-center text-sm leading-[14px] font-normal text-[#26304d] shadow-[0_0_0_1px_#a9adb5]">
            Media Center
          </div>
          <div className="flex h-6 items-center gap-3 pt-[2px] pr-3 pl-2 text-[#e9eaec]">
            <input
              type="range"
              aria-label="Position"
              value={position}
              onChange={(e) => setPosition(Number(e.target.value))}
              className="mr-1 h-[5px] min-w-0 flex-1 appearance-none rounded-full border-t border-b border-t-[#2b2f37] border-b-[#7e828b] bg-[#50545e] [&::-webkit-slider-thumb]:size-px [&::-webkit-slider-thumb]:appearance-none"
            />
            <button type="button" aria-label="Repeat">
              <svg viewBox="0 0 16 14" className="h-[14px] w-4">
                <path d="M2 7V5Q2 3.5 4 3.5H11M14 7V9Q14 10.5 12 10.5H5" fill="none" stroke="currentColor" strokeWidth="2" />
                <path d="M10 .5 15 3.5 10 6.5ZM6 7.5 1 10.5 6 13.5Z" fill="currentColor" />
              </svg>
            </button>
            <button type="button" aria-label="Shuffle">
              <svg viewBox="0 0 16 14" className="h-[14px] w-4">
                <path d="M1 4H11M1 10H11" fill="none" stroke="currentColor" strokeWidth="2" />
                <path d="M10 1 15 4 10 6.5ZM10 7.5 15 10 10 13Z" fill="currentColor" />
              </svg>
            </button>
            <button type="button" aria-label="Equalizer">
              <svg viewBox="0 0 16 14" className="h-[14px] w-4">
                <path d="M3 2V12M8 2V12M13 2V12" fill="none" stroke="currentColor" strokeWidth="2" />
                <path d="M1.5 9H4.5V11H1.5ZM6.5 3H9.5V5H6.5ZM11.5 6H14.5V8H11.5Z" fill="currentColor" />
              </svg>
            </button>
          </div>
        </div>

        <div className="w-[166px] shrink-0 pt-3 pr-[11px] pl-8">
          <label className="flex h-6 items-center rounded-xs bg-[#efefef] pb-[2px] pl-[6px] shadow-[-1px_-1px_0_1px_#2d333e]">
            <svg viewBox="0 0 8 5" className="h-[5px] w-2 shrink-0" aria-hidden="true">
              <path d="M0 0H8L4 5Z" fill="#7d8085" />
            </svg>
            <input
              type="search"
              aria-label="Search"
              placeholder="Search"
              className="min-w-0 flex-1 pl-4 text-center placeholder-[#7f8287]"
            />
          </label>
        </div>
      </div>
    </header>
  );
};

const App: React.FC = () => (
  <div className="relative flex min-h-screen flex-col bg-[linear-gradient(#2b2724,#4a3a2c_15%,#8a6a40_25%,#5a2412_40%,#a06a24_55%,#4f2512_65%,#b48a4c_78%,#3a2012)] px-[3px] pt-[2px] pb-1 font-['Noto_Sans','Open_Sans',sans-serif] text-[13px] leading-[18px] font-light">
    <Gradients />
    <div className="flex flex-1 flex-col rounded-t-md rounded-b-sm border border-[#10141b] bg-linear-to-b from-[#5d606a] via-[#343a44] via-50% to-[#0c0f16]">
      <Header />
      <div className="flex flex-1 gap-[6px] px-[5px]">
        <Sidebar />
        <FileView />
      </div>
      <footer className="flex h-[21px] items-center justify-center text-[#f4f5f7]">
        01 - Silvia Perez Cruz voz Ravid Goldschmidt Hang - Gitana, from llama by Silvia Perez Cruz &amp; Ravid Goldschmi (DFF - 4:48 - 194 MB)
      </footer>
    </div>
    <OptionsDialog />
  </div>
);

export default App;
